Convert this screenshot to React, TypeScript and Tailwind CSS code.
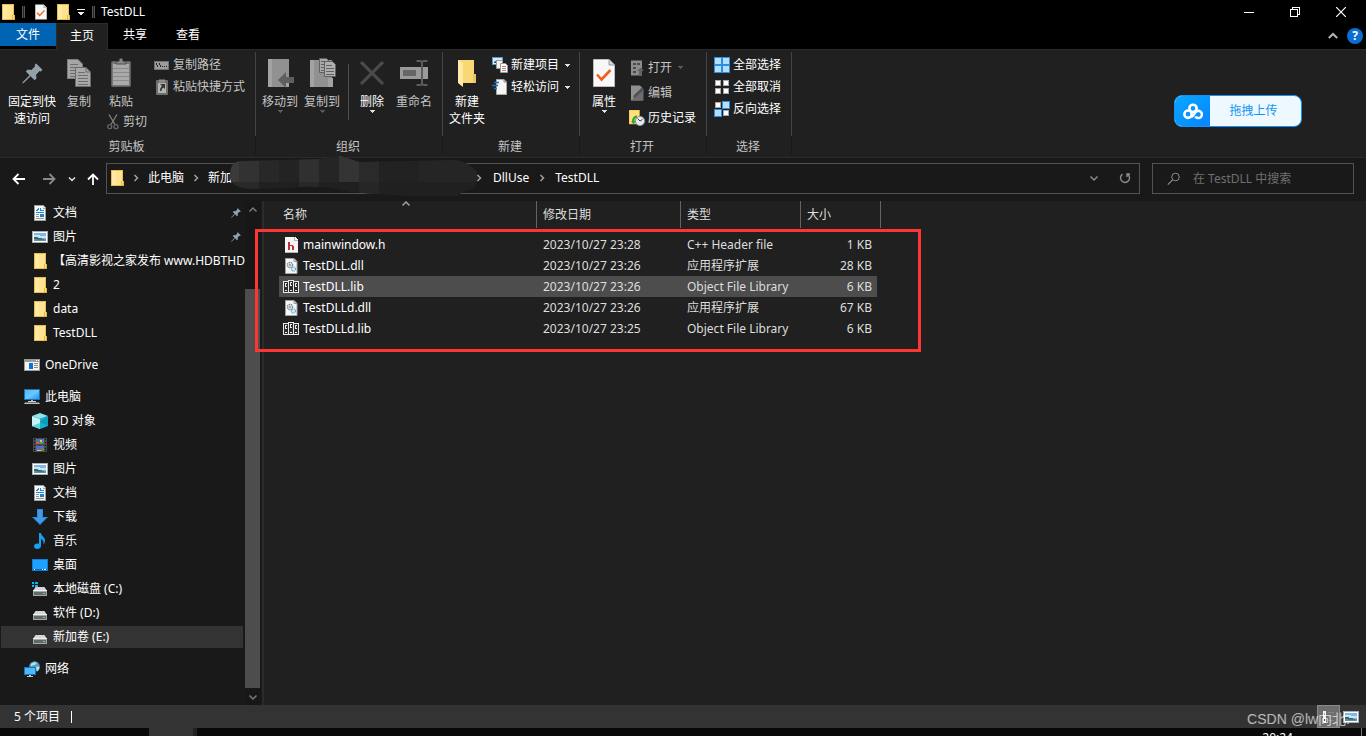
import React from "react";

type IconProps = { className?: string };

const FolderIcon = ({ className = "" }: IconProps) => (
  <svg width="16" height="16" viewBox="0 0 16 16" className={className} aria-hidden="true" shapeRendering="crispEdges">
    <path d="M2 0h12v11h1v5H2z" fill="#e8bf4c" />
    <path d="M3 1h10v14H3z" fill="#ffe391" />
    <path d="M3 1h4v14H3z" fill="#ffe9a4" />
    <path d="M12 11h3v5h-3z" fill="#e0b43e" />
    <path d="M13 11h1v4h-1z" fill="#ffe07f" />
  </svg>
);

const PinShape = ({ className = "", size }: IconProps & { size: number }) => (
  <svg width={size} height={size} viewBox="0 0 20 20" className={className} aria-hidden="true">
    <path d="M13.5 0.5L19.5 6.5L18 8L16.8 7.6L13.4 11.2L13.8 14.8L12 16.4L8.2 12.6L1.6 19L0.2 19.6L0.8 18L7.2 11.6L3.6 8L5.4 6.2L9 6.6L12.5 3.2L12 2z" fill="#93a1ab" />
  </svg>
);

const DocIcon = () => (
  <svg width="16" height="16" viewBox="0 0 16 16" aria-hidden="true" shapeRendering="crispEdges">
    <path d="M2 0h9l3 3v13H2z" fill="#9aa0a3" />
    <path d="M3 1h8v3h2v11H3z" fill="#f6f8f9" />
    <path d="M11 1h1v1h1v1h-2z" fill="#dcdcdc" />
    <path d="M6 3h1v1H6zM8 3h1v1H8zM5 4h2v1H5zM8 4h1v1H8zM4 5h2v1H4zM8 5h4v1H8zM4 7h8v1H4z" fill="#1c86d8" />
    <path d="M4 9h3v1H4zM4 11h3v1H4zM4 13h8v1H4z" fill="#8c989f" />
    <path d="M8 9h4v3H8z" fill="#1c86d8" />
    <path d="M8 11h4v1H8z" fill="#3f7d54" />
  </svg>
);

const PictureIcon = () => (
  <svg width="16" height="16" viewBox="0 0 16 16" aria-hidden="true" shapeRendering="crispEdges">
    <rect x="0" y="2" width="16" height="12" fill="#a9adaf" />
    <rect x="1" y="3" width="14" height="10" fill="#fff" />
    <rect x="2" y="4" width="12" height="8" fill="#7fb6ec" />
    <path d="M2 6h6v1h6v2H2z" fill="#cbe5f2" />
    <path d="M2 8h4v1h4v1H2z" fill="#3a6b62" />
    <path d="M2 10h12v2H2z" fill="#5a93a8" />
    <path d="M5 10h7v1H5z" fill="#3f7781" />
  </svg>
);

const OneDriveIcon = () => (
  <svg width="16" height="16" viewBox="0 0 16 16" aria-hidden="true" shapeRendering="crispEdges">
    <rect x="0" y="2" width="16" height="12" fill="#9b9b9b" />
    <rect x="1" y="5" width="14" height="8" fill="#f4f4f4" />
    <rect x="5" y="6" width="4" height="6" fill="#0a74d6" />
    <path d="M10 6h4v1h-4zM10 8h4v1h-4zM10 10h4v1h-4z" fill="#8a8a8a" />
    <path d="M12 3h1v1h-1zM14 3h1v1h-1z" fill="#fff" />
  </svg>
);

const PcIcon = () => (
  <svg width="16" height="16" viewBox="0 0 16 16" aria-hidden="true">
    <defs>
      <linearGradient id="pc" x1="0" y1="0" x2="1" y2="1">
        <stop offset="0" stopColor="#4db6f8" />
        <stop offset="0.5" stopColor="#6cc8ff" />
        <stop offset="1" stopColor="#1d8fe6" />
      </linearGradient>
    </defs>
    <rect x="0.5" y="0.500" width="15" height="10" fill="url(#pc)" stroke="#1a6fb5" />
    <path d="M7 11h2v1.500H7z" fill="#9fb3c0" />
    <path d="M4 12h8v1H4z" fill="#c9d5dc" />
    <path d="M1 13.500h14l1 1.500H0z" fill="#b6c4cd" />
  </svg>
);

const CubeIcon = () => (
  <svg width="16" height="16" viewBox="0 0 16 16" aria-hidden="true">
    <path d="M8 0l8 3-8 3-8-3z" fill="#8de6ee" />
    <path d="M0 3l8 3v10l-8-3z" fill="#c2f5f6" />
    <path d="M16 3L8 6v10l8-3z" fill="#19b2cb" />
    <path d="M0 13l8-3v6z" fill="#5fd0dd" />
    <path d="M16 13V3l-8 6z" fill="#0f9bc0" />
  </svg>
);

const VideoIcon = () => (
  <svg width="16" height="16" viewBox="0 0 16 16" aria-hidden="true" shapeRendering="crispEdges">
    <rect x="1" y="1" width="14" height="14" fill="#4a4a4a" />
    <path d="M2 2h1v1H2zM2 5h1v1H2zM2 8h1v1H2zM2 11h1v1H2zM2 13h1v1H2zM13 2h1v1h-1zM13 5h1v1h-1zM13 8h1v1h-1zM13 11h1v1h-1zM13 13h1v1h-1z" fill="#111" />
    <rect x="4" y="2" width="8" height="5" fill="#4c6fc9" />
    <rect x="4" y="9" width="8" height="5" fill="#4c6fc9" />
    <path d="M4 5h3v2H4zM9 11h2v1H9z" fill="#e4572e" />
    <path d="M8 3h2v2H8zM5 13h4v1H5z" fill="#f2c13b" />
    <path d="M8 5h3v2H8zM9 12h3v2H9z" fill="#4a9e3f" />
  </svg>
);

const DownloadIcon = () => (
  <svg width="16" height="16" viewBox="0 0 16 16" aria-hidden="true">
    <path d="M5 0h6v8h5l-8 8-8-8h5z" fill="#2b88dc" />
    <path d="M6 1h4v8h3.500L8 14.500 2.500 9H6z" fill="#429ae8" />
  </svg>
);

const MusicIcon = () => (
  <svg width="16" height="16" viewBox="0 0 16 16" aria-hidden="true">
    <path d="M7 0h2c0 3 4 4 4 7.500 0 2-1 3.500-1.500 4 .5-3-.5-4.500-2.500-5.500v7c0 2-1.800 3-3.700 3S2 15 2 13.300 3.600 10.500 5.500 10.500c.6 0 1.100.1 1.500.3z" fill="#18a0f5" />
  </svg>
);

const DesktopIcon = () => (
  <svg width="16" height="16" viewBox="0 0 16 16" aria-hidden="true" shapeRendering="crispEdges">
    <rect x="0" y="2" width="16" height="12" fill="#0b7fd4" />
    <rect x="1" y="3" width="14" height="9" fill="#1ea2ff" />
    <path d="M1 12h14v1H1z" fill="#0a6cb8" />
    <path d="M2 12h1v1H2zM10 12h1v1h-1zM12 12h2v1h-2z" fill="#fff" />
  </svg>
);

const DriveIcon = ({ system = false }: { system?: boolean }) => (
  <svg width="16" height="16" viewBox="0 0 16 16" aria-hidden="true">
    <path d="M3.500 6h9L15 10H1z" fill="#d4d6d7" />
    <rect x="1" y="10" width="14" height="5" fill="#a4a7a9" />
    <rect x="1" y="9" width="14" height="1" fill="#f2f2f2" />
    <rect x="2" y="11" width="12" height="3" fill="#65686a" />
    <rect x="11" y="12" width="2" height="1" fill="#5de07a" />
    {system && <path d="M0 1h2v2H0zM3 1h3v2H3zM0 4h2v2H0zM3 4h3v2H3z" fill="#10b5f2" />}
  </svg>
);

const NetworkIcon = () => (
  <svg width="16" height="16" viewBox="0 0 16 16" aria-hidden="true">
    <circle cx="10.500" cy="5.500" r="5.300" fill="#4f9fc0" />
    <path d="M7 3c2-2 4-1 5-2 1 1 0 3-2 3S8 6 7 5zM12 6c2-1 3 0 3.500 0 0 2-1 4-2.500 4.500z" fill="#b7e1ea" />
    <rect x="0.5" y="6.500" width="11" height="7" fill="#4eb8fb" stroke="#1b74ba" />
    <path d="M5 14h2v1H5zM3 15h6v1H3z" fill="#b5c7d3" />
  </svg>
);

const HeaderFileIcon = () => (
  <svg width="16" height="16" viewBox="0 0 16 16" aria-hidden="true" shapeRendering="crispEdges">
    <path d="M2 0h10l3 3v13H2z" fill="#f5f5f5" />
    <path d="M11 0h1v3h3v1h-4z" fill="#b5b5b5" />
    <path d="M2 15h13v1H2z" fill="#b5b5b5" />
    <path d="M5 5h2v3h3v1h1v4H9V9H7v4H5z" fill="#b5323a" />
  </svg>
);

const DllIcon = () => (
  <svg width="16" height="16" viewBox="0 0 16 16" aria-hidden="true">
    <path d="M2.500 0.500h8.500l3 3v12h-11.500z" fill="#f5f6f7" stroke="#a0a4a6" />
    <path d="M11 0.500v3h3" fill="none" stroke="#999" />
    <circle cx="7" cy="7" r="2.600" fill="#dfe5e8" stroke="#7f8d96" strokeWidth="1.300" strokeDasharray="1.400 .7" />
    <circle cx="7" cy="7" r="0.900" fill="#7f8d96" />
    <circle cx="10.500" cy="11" r="2.100" fill="#d5ebf7" stroke="#6aa6cb" strokeWidth="1.200" strokeDasharray="1.200 .6" />
  </svg>
);

const LibIcon = () => (
  <svg width="16" height="16" viewBox="0 0 16 16" aria-hidden="true" shapeRendering="crispEdges">
    <path d="M0 2h5V1h6v1h5v12H0z" fill="#e9e9e9" />
    <path d="M1 3h4v10H1zM6 2h4v11H6zM11 3h4v10h-4z" fill="#2c2c2c" />
    <path d="M2 4h2v4H2zM7 3h2v4H7zM12 4h2v4h-2zM2 11h2v1H2zM7 11h2v1H7zM12 11h2v1h-2z" fill="#e9e9e9" />
    <path d="M3 5h1v2H3zM8 4h1v2H8zM13 5h1v2h-1z" fill="#2c2c2c" />
  </svg>
);

const CheckDoc = ({ w, h }: { w: number; h: number }) => (
  <svg width={w} height={h} viewBox="0 0 22 28" aria-hidden="true">
    <path d="M0.500 0.500H16L21.500 6v21.500H.5z" fill="#f8f8f8" stroke="#bdbdbd" />
    <path d="M16 .5V6h5.500" fill="#d8d8d8" stroke="#9a9a9a" />
    <path d="M4 15.500l4.500 5L17.500 11" fill="none" stroke="#f2601c" strokeWidth="2.600" />
  </svg>
);

const CopyBig = () => (
  <svg width="24" height="28" viewBox="0 0 24 28" aria-hidden="true">
    <path d="M.5.5H11L15.500 5v14.500H.5z" fill="#a5a5a5" stroke="#7d7d7d" />
    <path d="M3 5.500h8M3 8.500h9M3 11.500h9M3 14.500h6M3 17.500h5" stroke="#6e6e6e" />
    <path d="M8.500 8.500H19L23.500 13v14.500h-15z" fill="#a9a9a9" stroke="#6a6a6a" />
    <path d="M19 8.500V13h4.500" fill="none" stroke="#6a6a6a" />
    <path d="M11 13.500h7M11 16.500h10M11 19.500h10M11 22.500h10M11 25.500h10" stroke="#6e6e6e" />
  </svg>
);

const PasteBig = () => (
  <svg width="20" height="30" viewBox="0 0 20 30" aria-hidden="true">
    <rect x="0.5" y="3.500" width="19" height="25" rx="1" fill="#767676" stroke="#5e5e5e" />
    <rect x="2" y="6" width="16" height="21" fill="#a9a9a9" />
    <path d="M2 10.500h16M2 14.500h16M2 18.500h16M2 22.500h16" stroke="#8a8a8a" />
    <path d="M5 6V3.500h3C8 1 9 .5 10 .5s2 .5 2 3h3V6z" fill="#8a8a8a" stroke="#4f4f4f" />
  </svg>
);

const MoveTo = () => (
  <svg width="28" height="30" viewBox="0 0 28 30" aria-hidden="true">
    <path d="M2 1h21v28H2z" fill="#919191" />
    <path d="M2 1h4v28H2zM19 20h4v9h-4z" fill="#a3a3a3" />
    <path d="M12 22l8-8v5h8v6h-8v5z" fill="#5f5f5f" />
  </svg>
);

const CopyTo = () => (
  <svg width="28" height="32" viewBox="0 0 28 32" aria-hidden="true">
    <path d="M2 3h22v27H2z" fill="#919191" />
    <path d="M2 3h4v27H2zM20 21h5v9h-5z" fill="#a3a3a3" />
    <path d="M11.500 1.500h7l2 2v12h-9z" fill="#a8a8a8" stroke="#606060" />
    <path d="M13 4.500h5M13 7.500h3M13 10.500h3M13 13.500h3" stroke="#606060" />
    <path d="M16.500 4.500h8l3 3v12h-11z" fill="#b0b0b0" stroke="#606060" />
    <path d="M18 8.500h6M18 11.500h8M18 14.500h8M18 17.500h8" stroke="#606060" />
  </svg>
);

const RenameBig = () => (
  <svg width="28" height="28" viewBox="0 0 28 28" aria-hidden="true">
    <rect x="0" y="8" width="28" height="12" fill="#9a9a9a" />
    <rect x="3" y="11" width="13" height="6" fill="#666" />
    <path d="M16.500 2h3.500c1 0 2 .5 2 2v20c0 1.500-1 2-2 2h-3.500M27.500 2H24c-1 0-2 .5-2 2M27.500 26H24c-1 0-2-.5-2-2" fill="none" stroke="#5c5c5c" strokeWidth="2" />
  </svg>
);

const NewFolderBig = () => (
  <svg width="20" height="28" viewBox="0 0 20 28" aria-hidden="true">
    <path d="M1 1h16v14h2v9H1z" fill="#f8d775" />
    <path d="M1 1l5 3v24l-5-4z" fill="#ffe9a6" />
    <path d="M16 15h3v9h-3z" fill="#ecc565" />
  </svg>
);

const Scissors = () => (
  <svg width="12" height="16" viewBox="0 0 12 16" aria-hidden="true">
    <path d="M2 .5l6 10M10 .5l-6 10" stroke="#808080" strokeWidth="1.300" />
    <circle cx="2.700" cy="12.700" r="2" fill="none" stroke="#666" strokeWidth="1.300" />
    <circle cx="9" cy="12.700" r="2" fill="none" stroke="#666" strokeWidth="1.300" />
  </svg>
);

const PathIcon = () => (
  <svg width="16" height="16" viewBox="0 0 16 16" aria-hidden="true" shapeRendering="crispEdges">
    <rect x="0" y="4" width="15" height="9" fill="#6f6f6f" />
    <rect x="1" y="5" width="13" height="7" fill="#9c9c9c" />
    <path d="M2 6h1v2h1v2H3V8H2zM5 6h1v2h1v2H6V8H5zM8 9h1v1H8zM10 9h1v1h-1zM12 9h1v1h-1z" fill="#222" />
  </svg>
);

const ShortcutPaste = () => (
  <svg width="16" height="16" viewBox="0 0 16 16" aria-hidden="true">
    <rect x="2" y="1" width="12" height="15" rx="1" fill="#6e6e6e" />
    <rect x="4" y="4" width="8" height="10" fill="#b4b4b4" />
    <path d="M5 0.500h6v3H5z" fill="#8d8d8d" />
    <path d="M6 5h5v5L9.500 8.500C8 9.500 7.500 10.500 7.500 12H6c0-2 .4-3.500 2-5z" fill="#333" />
  </svg>
);

const NewItemIcon = () => (
  <svg width="16" height="16" viewBox="0 0 16 16" aria-hidden="true">
    <rect x="0.5" y="0.500" width="10" height="7" fill="#d4ecf8" stroke="#5b98bd" />
    <path d="M2 5l3-2 2 2 2-1v2H2z" fill="#27577a" />
    <path d="M4.500 3.500h6v8h-6z" fill="#f3f3f3" stroke="#9a9a9a" />
    <path d="M8.500 6.500h5l2 2v7h-7z" fill="#fafafa" stroke="#9a9a9a" />
    <path d="M10 9.500h4M10 13.500h4" stroke="#e46a5c" />
    <path d="M10 11.500h4" stroke="#6c9fd0" />
  </svg>
);

const EasyAccessIcon = () => (
  <svg width="16" height="16" viewBox="0 0 16 16" aria-hidden="true">
    <path d="M4.500.5H12L14.500 3v12.500h-10z" fill="#f5f5f5" stroke="#a8a8a8" />
    <path d="M12 .5V3h2.500" fill="none" stroke="#888" />
    <path d="M2 3.500h5M0 6.500h6M2 9.500h3" stroke="#1a72c4" strokeWidth="1.400" />
  </svg>
);

const OpenIcon = () => (
  <svg width="16" height="16" viewBox="0 0 16 16" aria-hidden="true">
    <rect x="2" y="0.500" width="11" height="15" fill="#8c8c8c" />
    <path d="M4 3h3v2H4zM4 7h3v2H4zM4 11h3v2H4zM8 3h3v2H8z" fill="#4b4b4b" />
    <path d="M8 11l3.500-3.500L15 11h-2v5h-3v-5z" fill="#646464" />
  </svg>
);

const EditIcon = () => (
  <svg width="16" height="16" viewBox="0 0 16 16" aria-hidden="true">
    <path d="M2 .5h9l3 3v12H2z" fill="#8f8f8f" />
    <path d="M2.500 15.500L14.500 4v11.500z" fill="#6c6c6c" />
    <path d="M4 13l1-3 8-7.500 2 2L7 12z" fill="#505050" />
  </svg>
);

const HistoryIcon = () => (
  <svg width="16" height="16" viewBox="0 0 16 16" aria-hidden="true">
    <path d="M0 0h10.500v14H0z" fill="#ffe07c" stroke="#d8ac35" strokeWidth=".6" />
    <path d="M3 11c0-3 2-5.500 5-5.500V8c-2 0-2.500 1-2.500 3l1.500 0-2.500 3.500L2 11z" fill="#36a83a" />
    <circle cx="11" cy="11" r="4.600" fill="#e6e9eb" stroke="#8b9195" />
    <path d="M8.500 8.500L11 11l2.500-1.500" fill="none" stroke="#3d4448" />
  </svg>
);

const SelectIcon = ({ on }: { on: boolean[] }) => (
  <svg width="16" height="16" viewBox="0 0 16 16" aria-hidden="true" shapeRendering="crispEdges">
    {on.map((sel, i) => {
      const x = (i % 2) * 8;
      const y = i < 2 ? 0 : 8;
      return sel ? (
        <g key={i}>
          <rect x={x} y={y} width="8" height="8" fill="#2b8fe0" />
          <rect x={x + 1} y={y + 1} width="6" height="6" fill="#b4defc" />
        </g>
      ) : (
        <g key={i}>
          <rect x={x + 1} y={y + 1} width="6" height="6" fill="#a8a8a8" />
          <rect x={x + 2} y={y + 2} width="4" height="4" fill="#fff" />
        </g>
      );
    })}
  </svg>
);

const Caret = ({ dim = false }: { dim?: boolean }) => (
  <svg width="5" height="3" viewBox="0 0 5 3" aria-hidden="true" shapeRendering="crispEdges" className={dim ? "text-[#5a5a5a]" : "text-[#e0e0e0]"}>
    <path d="M0 0h5v1H4v1H3v1H2V2H1V1H0z" fill="currentColor" />
  </svg>
);

const Chevron = ({ dir, className = "" }: { dir: "up" | "down" | "right" } & IconProps) => (
  <svg width="10" height="10" viewBox="0 0 10 10" className={className} aria-hidden="true">
    <path
      d={dir === "up" ? "M1.500 6.500L5 3l3.500 3.500" : dir === "down" ? "M1.500 3.500L5 7l3.500-3.500" : "M3.500 2L6.500 5l-3 3"}
      fill="none"
      stroke="currentColor"
      strokeWidth="1.500"
    />
  </svg>
);

type BigProps = { icon: React.ReactNode; lines: string[]; dim?: boolean; caret?: boolean; width: string };

const BigButton = ({ icon, lines, dim = false, caret = false, width }: BigProps) => (
  <button type="button" className={`flex shrink-0 flex-col items-center self-start pt-[3px] ${width} ${dim ? "text-[#c4c4c4]" : "text-white"}`}>
    <span className="flex h-8 items-center justify-center">{icon}</span>
    <span className="mt-1 whitespace-nowrap leading-[17px]">
      {lines.map((l) => (
        <span key={l} className="block">{l}</span>
      ))}
    </span>
    {caret && <Caret dim={dim} />}
  </button>
);

type SmallProps = { icon: React.ReactNode; label: string; dim?: boolean; caret?: boolean; height?: string };

const SmallButton = ({ icon, label, dim = false, caret = false, height = "h-[22px]" }: SmallProps) => (
  <button type="button" className={`flex shrink-0 items-center whitespace-nowrap ${height} ${dim ? "text-[#c4c4c4]" : "text-white"}`}>
    <span className="mr-[3px] flex w-4 justify-center">{icon}</span>
    {label}
    {caret && <span className="ml-1.5"><Caret dim={dim} /></span>}
  </button>
);

const Group = ({ label, width, children }: { label: string; width: string; children: React.ReactNode }) => (
  <section aria-label={label} className={`flex shrink-0 flex-col ${width}`}>
    <div className="mt-0.5 flex h-[84px] border-r border-[#444444] pt-0.5">{children}</div>
    <div className="h-[19px] border-r border-[#191919] pr-0.5 text-center leading-[21px] text-[#c4c4c4]">{label}</div>
  </section>
);

const Smudge = () => (
  <svg width="252" height="42" viewBox="0 0 252 42" className="absolute -top-2 left-[122px]" aria-hidden="true">
    <defs>
      <clipPath id="blot">
        <path d="M1 20C1 9 5 5 14 5L92 3C100 1 108 0 112 0L130 6L226 4C240 6 249 14 249 21C249 29 244 34 234 36L228 40L176 40L120 36C100 30 80 30 60 32L22 33C8 32 1 28 1 20z" />
      </clipPath>
    </defs>
    <g clipPath="url(#blot)" shapeRendering="crispEdges">
      <rect width="252" height="42" fill="#202020" />
      <rect width="10" height="26" fill="#3a3a3a" />
      <rect x="10" width="20" height="26" fill="#323232" />
      <rect x="30" width="20" height="26" fill="#282828" />
      <rect x="50" width="20" height="26" fill="#232323" />
      <rect x="70" width="20" height="26" fill="#303030" />
      <rect x="90" width="20" height="26" fill="#252525" />
      <rect x="110" width="20" height="26" fill="#343434" />
      <rect x="130" width="20" height="26" fill="#2a2a2a" />
      <rect x="150" width="40" height="26" fill="#222222" />
      <rect x="190" width="62" height="26" fill="#252525" />
      <rect y="26" width="30" height="16" fill="#292929" />
      <rect x="70" y="26" width="20" height="16" fill="#282828" />
      <rect x="130" y="26" width="20" height="16" fill="#262626" />
    </g>
  </svg>
);

type NavEntry = { label: string; icon: React.ReactNode; root?: boolean; pinned?: boolean; gap?: boolean; selected?: boolean };

const navEntries: NavEntry[] = [
  { label: "文档", icon: <DocIcon />, pinned: true },
  { label: "图片", icon: <PictureIcon />, pinned: true },
  { label: "【高清影视之家发布 www.HDBTHD", icon: <FolderIcon /> },
  { label: "2", icon: <FolderIcon /> },
  { label: "data", icon: <FolderIcon /> },
  { label: "TestDLL", icon: <FolderIcon /> },
  { label: "OneDrive", icon: <OneDriveIcon />, root: true, gap: true },
  { label: "此电脑", icon: <PcIcon />, root: true, gap: true },
  { label: "3D 对象", icon: <CubeIcon /> },
  { label: "视频", icon: <VideoIcon /> },
  { label: "图片", icon: <PictureIcon /> },
  { label: "文档", icon: <DocIcon /> },
  { label: "下载", icon: <DownloadIcon /> },
  { label: "音乐", icon: <MusicIcon /> },
  { label: "桌面", icon: <DesktopIcon /> },
  { label: "本地磁盘 (C:)", icon: <DriveIcon system /> },
  { label: "软件 (D:)", icon: <DriveIcon /> },
  { label: "新加卷 (E:)", icon: <DriveIcon />, selected: true },
  { label: "网络", icon: <NetworkIcon />, root: true, gap: true },
];

const files = [
  { name: "mainwindow.h", date: "2023/10/27 23:28", type: "C++ Header file", size: "1 KB", icon: <HeaderFileIcon /> },
  { name: "TestDLL.dll", date: "2023/10/27 23:26", type: "应用程序扩展", size: "28 KB", icon: <DllIcon /> },
  { name: "TestDLL.lib", date: "2023/10/27 23:26", type: "Object File Library", size: "6 KB", icon: <LibIcon />, selected: true },
  { name: "TestDLLd.dll", date: "2023/10/27 23:26", type: "应用程序扩展", size: "67 KB", icon: <DllIcon /> },
  { name: "TestDLLd.lib", date: "2023/10/27 23:25", type: "Object File Library", size: "6 KB", icon: <LibIcon /> },
];

const TitleBar = () => (
  <header className="flex h-[23px] shrink-0 items-center">
    <FolderIcon />
    <span className="ml-1.5 h-3 w-[3px] border-x border-[#555555] bg-[#222222]" />
    <button type="button" aria-label="属性" className="ml-2.5"><CheckDoc w={12} h={16} /></button>
    <button type="button" aria-label="新建文件夹" className="ml-2"><FolderIcon /></button>
    <button type="button" aria-label="自定义快速访问工具栏" className="ml-1.5">
      <svg width="8" height="8" viewBox="0 0 8 8" shapeRendering="crispEdges" aria-hidden="true">
        <path d="M0 1h8v1H0zM1 4h6v1H6v1H5v1H3V6H2V5H1z" fill="#eee" />
      </svg>
    </button>
    <span className="ml-[7px] h-3 w-[3px] border-x border-[#555555] bg-[#222222]" />
    <h1 className="ml-1.5">TestDLL</h1>
    <div className="ml-auto flex h-5 pr-0.5">
      <button type="button" aria-label="最小化" className="flex w-[46px] items-center justify-center">
        <svg width="10" height="10" viewBox="0 0 10 10" shapeRendering="crispEdges"><path d="M0 5h10v1H0z" fill="#fff" /></svg>
      </button>
      <button type="button" aria-label="还原" className="flex w-[46px] items-center justify-center">
        <svg width="10" height="10" viewBox="0 0 10 10" shapeRendering="crispEdges"><path d="M.5 2.500h7v7h-7zM2.500 2.500v-2h7v7h-2" fill="none" stroke="#fff" /></svg>
      </button>
      <button type="button" aria-label="关闭" className="flex w-[46px] items-center justify-center">
        <svg width="10" height="10" viewBox="0 0 10 10"><path d="M0 0l10 10M10 0L0 10" stroke="#fff" strokeWidth="1.200" /></svg>
      </button>
    </div>
  </header>
);

const Tabs = () => (
  <nav className="flex h-[26px] shrink-0 leading-6" aria-label="功能区">
    <button type="button" className="h-[23px] w-14 bg-[#0063b1]">文件</button>
    <button type="button" className="relative z-10 -mb-px h-[27px] w-[52px] border border-b-0 border-[#2b2b2b] bg-[#202020] pb-0.5">主页</button>
    <button type="button" className="h-6 w-[54px]">共享</button>
    <button type="button" className="h-6 w-[52px]">查看</button>
    <div className="ml-auto flex items-center pr-[3px]">
      <button type="button" aria-label="最小化功能区" className="mr-[9px] text-[#b5b5b5]">
        <svg width="10" height="8" viewBox="0 0 10 8" className="block"><path d="M.8 6L5 2l4.200 4" fill="none" stroke="currentColor" strokeWidth="2" /></svg>
      </button>
      <button type="button" aria-label="帮助" className="h-4 w-4 rounded-full bg-[#0a6fd0] text-center text-xs font-bold leading-4">?</button>
    </div>
  </nav>
);

const Ribbon = () => (
  <div className="relative flex h-[109px] shrink-0 overflow-hidden border-y border-[#2b2b2b] bg-[#202020]">
    <Group label="剪贴板" width="w-[256px]">
      <BigButton width="w-16" lines={["固定到快", "速访问"]} icon={<PinShape size={21} />} />
      <BigButton width="w-[30px]" lines={["复制"]} dim icon={<CopyBig />} />
      <div className="ml-3 flex w-[41px] flex-col">
        <BigButton width="w-[30px]" lines={["粘贴"]} dim icon={<PasteBig />} />
        <SmallButton height="h-6" label="剪切" dim icon={<Scissors />} />
      </div>
      <div className="ml-[7px] flex flex-col">
        <SmallButton label="复制路径" dim icon={<PathIcon />} />
        <SmallButton label="粘贴快捷方式" dim icon={<ShortcutPaste />} />
      </div>
    </Group>
    <Group label="组织" width="w-[187px]">
      <div className="ml-[3px] flex">
        <BigButton width="w-[42px]" lines={["移动到"]} dim caret icon={<MoveTo />} />
        <BigButton width="w-[42px]" lines={["复制到"]} dim caret icon={<CopyTo />} />
        <span className="ml-[5px] mr-0.5 mt-2.5 h-14 w-px bg-[#4f4f4f]" />
        <BigButton
          width="w-[42px]"
          lines={["删除"]}
          caret
          icon={<svg width="24" height="24" viewBox="0 0 24 24" aria-hidden="true"><path d="M1 1l22 22M23 1L1 23" stroke="#4a4a4a" strokeWidth="3.200" /></svg>}
        />
        <BigButton width="w-[42px]" lines={["重命名"]} dim icon={<RenameBig />} />
      </div>
    </Group>
    <Group label="新建" width="w-[137px]">
      <BigButton width="w-12" lines={["新建", "文件夹"]} icon={<NewFolderBig />} />
      <div className="ml-px flex flex-col">
        <SmallButton label="新建项目" caret icon={<NewItemIcon />} />
        <SmallButton label="轻松访问" caret icon={<EasyAccessIcon />} />
      </div>
    </Group>
    <Group label="打开" width="w-[127px]">
      <BigButton width="w-12" lines={["属性"]} caret icon={<CheckDoc w={22} h={28} />} />
      <div className="ml-px flex flex-col pt-px">
        <SmallButton height="h-[25px]" label="打开" dim caret icon={<OpenIcon />} />
        <SmallButton height="h-[25px]" label="编辑" dim icon={<EditIcon />} />
        <SmallButton height="h-[25px]" label="历史记录" icon={<HistoryIcon />} />
      </div>
    </Group>
    <Group label="选择" width="w-[85px]">
      <div className="ml-[7px] flex flex-col">
        <SmallButton label="全部选择" icon={<SelectIcon on={[true, true, true, true]} />} />
        <SmallButton label="全部取消" icon={<SelectIcon on={[false, false, false, false]} />} />
        <SmallButton label="反向选择" icon={<SelectIcon on={[false, true, true, false]} />} />
      </div>
    </Group>
    <button type="button" className="absolute right-16 top-[45px] flex h-8 w-32 overflow-hidden rounded-lg border border-[#0d94ff] bg-[#eef8ff] text-[#1296f0]">
      <span className="flex h-full w-[35px] items-center justify-center bg-linear-to-br from-[#0ca6ff] to-[#0a85ff]">
        <svg width="20" height="17" viewBox="0 0 22 18" aria-hidden="true">
          <g fill="none" stroke="#fff" strokeWidth="2.800">
            <circle cx="11" cy="5.500" r="4" />
            <circle cx="5.500" cy="12" r="4" />
            <path d="M9 15c2-.5 3-2.500 4.200-4.500a4 4 0 1 1 .3 4" />
          </g>
        </svg>
      </span>
      <span className="flex-1 pr-1 text-center leading-[30px]">拖拽上传</span>
    </button>
  </div>
);

const NavBar = () => (
  <div className="flex h-[43px] shrink-0 items-start pr-3 pt-[5px]">
    <div className="flex h-8 w-[106px] shrink-0 items-center pl-3">
      <button type="button" aria-label="后退">
        <svg width="14" height="12" viewBox="0 0 14 12"><path d="M6.500 1L1.500 6l5 5M1.500 6H13" fill="none" stroke="#fff" strokeWidth="1.800" /></svg>
      </button>
      <button type="button" aria-label="前进" className="ml-4">
        <svg width="14" height="12" viewBox="0 0 14 12"><path d="M7.500 1l5 5-5 5M12.500 6H1" fill="none" stroke="#8a8a8a" strokeWidth="1.800" /></svg>
      </button>
      <button type="button" aria-label="最近浏览的位置" className="ml-3">
        <svg width="8" height="6" viewBox="0 0 8 6"><path d="M1 1.500l3 3 3-3" fill="none" stroke="#e5e5e5" strokeWidth="1.500" /></svg>
      </button>
      <button type="button" aria-label="上移" className="ml-[11px]">
        <svg width="12" height="13" viewBox="0 0 12 13"><path d="M1 6.500l5-5 5 5M6 1.500V12" fill="none" stroke="#fff" strokeWidth="1.800" /></svg>
      </button>
    </div>
    <div className="relative flex h-[31px] min-w-0 flex-1 items-center border border-[#535353] pb-px pl-0.5">
      <FolderIcon />
      <Chevron dir="right" className="ml-1.5 text-[#a0a0a0]" />
      <a href="#pc" className="ml-[7px] whitespace-nowrap">此电脑</a>
      <Chevron dir="right" className="ml-[7px] text-[#a0a0a0]" />
      <a href="#volume" className="ml-[7px] w-[268px] shrink-0 whitespace-nowrap">新加</a>
      <Chevron dir="right" className="relative z-10 -ml-0.5 text-[#a0a0a0]" />
      <a href="#dlluse" className="ml-[9px]">DllUse</a>
      <Chevron dir="right" className="ml-2 text-[#a0a0a0]" />
      <a href="#testdll" className="ml-2">TestDLL</a>
      <button type="button" aria-label="以前的位置" className="ml-auto mr-5 text-[#8c8c8c]"><Chevron dir="down" /></button>
      <button type="button" aria-label="刷新" className="mr-2 text-[#8c8c8c]">
        <svg width="12" height="12" viewBox="0 0 12 12"><path d="M3.500 2.200A4.500 4.500 0 1 0 8.800 2.400M8 5V2h3" fill="none" stroke="currentColor" strokeWidth="1.400" /></svg>
      </button>
      <Smudge />
    </div>
    <label className="ml-3 flex h-[31px] w-[202px] shrink-0 items-center border border-[#535353] pl-3.5">
      <svg width="14" height="14" viewBox="0 0 14 14" aria-hidden="true"><circle cx="8.500" cy="5" r="3.800" fill="none" stroke="#8a8a8a" /><path d="M5.800 7.700L.8 12.700" stroke="#8a8a8a" strokeWidth="1.200" /></svg>
      <input type="search" aria-label="搜索" placeholder="在 TestDLL 中搜索" className="ml-3 w-40 bg-transparent outline-none placeholder:text-[#707070]" />
    </label>
  </div>
);

const Sidebar = () => (
  <aside className="flex w-[264px] shrink-0 border-r-2 border-[#2b2b2b]">
    <nav aria-label="导航窗格" className="w-[245px] shrink-0 overflow-hidden pr-px">
      {navEntries.map((e, i) => (
        <a
          key={i}
          href={`#nav-${i}`}
          className={`flex h-6 items-center whitespace-nowrap ${e.gap ? "mt-2" : ""} ${e.selected ? "mx-px border-y border-[#191919] bg-[#333333] pl-[31px]" : e.root ? "pl-6" : "pl-8"}`}
        >
          <span className="mr-[5px] shrink-0">{e.icon}</span>
          {e.label}
          {e.pinned && <PinShape size={10} className="ml-auto mr-[3px]" />}
        </a>
      ))}
    </nav>
    <div className="flex w-[15px] flex-col items-center bg-[#171717] pb-[3px] pt-1" aria-hidden="true">
      <Chevron dir="up" className="text-[#7a7a7a]" />
      <div className="mb-1 mt-[74px] w-[15px] flex-1 bg-[#4d4d4d]" />
      <Chevron dir="down" className="text-[#7a7a7a]" />
    </div>
  </aside>
);

const FileList = () => (
  <main className="relative min-w-0 flex-1 overflow-hidden bg-[#202020]">
    <table className="ml-[15px] table-fixed border-separate border-spacing-0 text-left">
      <colgroup>
        <col className="w-[258px]" />
        <col className="w-36" />
        <col className="w-[120px]" />
        <col className="w-[76px]" />
        <col className="w-1" />
      </colgroup>
      <thead>
        <tr className="h-[27px] text-[#dedede]">
          <th className="relative border-r border-[#636363] p-0 pl-1 font-normal">
            <Chevron dir="up" className="absolute left-[122px] -top-0.5 text-[#a0a0a0]" />
            名称
          </th>
          <th className="border-r border-[#636363] p-0 pl-1.5 font-normal">修改日期</th>
          <th className="border-r border-[#636363] p-0 pl-1.5 font-normal">类型</th>
          <th colSpan={2} className="border-r border-[#636363] p-0 pl-1.5 font-normal">大小</th>
        </tr>
      </thead>
      <tbody>
        <tr className="h-1.5"><td colSpan={5} className="p-0" /></tr>
        {files.map((f) => {
          const bg = f.selected ? "bg-[#4d4d4d]" : "";
          return (
            <tr key={f.name} className="h-[21px] whitespace-nowrap leading-5 text-[#dedede]">
              <td className={`p-0 pl-1 text-white ${bg}`}>
                <span className="flex items-center gap-1">{f.icon}{f.name}</span>
              </td>
              <td className={`p-0 pl-1.5 ${bg}`}>{f.date}</td>
              <td className={`p-0 pl-1.5 ${bg}`}>{f.type}</td>
              <td className={`p-0 pr-[5px] text-right ${bg}`}>{f.size}</td>
              <td className="p-0" />
            </tr>
          );
        })}
      </tbody>
    </table>
  </main>
);

const StatusBar = () => (
  <footer className="relative flex h-[23px] shrink-0 items-center bg-[#333333] pl-3.5">
    <span>5 个项目</span>
    <span className="ml-[11px] h-3 w-px bg-white" />
    <div className="ml-auto flex h-full items-center pr-[7px]">
      <button type="button" aria-label="详细信息" className="flex h-full w-[23px] items-center justify-center border border-[#8a8a8a] bg-[#6e6e6e]">
        <svg width="14" height="14" viewBox="0 0 14 14" shapeRendering="crispEdges"><path d="M1 1h3v12H1z" fill="#f2f2f2" /><path d="M2 3h1v2H2zM2 9h1v2H2z" fill="#1c5c86" /><path d="M6 2h6v1H6zM6 6h6v1H6zM6 10h6v1H6z" fill="#858585" /></svg>
      </button>
      <button type="button" aria-label="大缩略图" className="ml-[3px]"><PictureIcon /></button>
    </div>
    <span className="absolute right-4 top-1 whitespace-nowrap font-['Liberation_Sans','Noto_Sans_CJK_SC',sans-serif] text-sm leading-5 text-white/65">CSDN @lw向北.</span>
  </footer>
);

const Taskbar = () => (
  <div className="flex h-2 shrink-0 overflow-hidden bg-[#080808]">
    <span className="ml-[149px] w-11 bg-[#333333]" />
    <span className="w-1 bg-[#222222]" />
    <span className="ml-auto mr-[68px] pt-0.5 leading-4">20:24</span>
    <span className="mr-1 w-px bg-[#777777]" />
  </div>
);

export default function App() {
  return (
    <div className="flex h-screen flex-col overflow-hidden bg-black font-['Noto_Sans','Noto_Sans_CJK_SC',sans-serif] text-xs text-white">
      <TitleBar />
      <Tabs />
      <Ribbon />
      <div className="relative flex min-h-0 flex-1 flex-col bg-[#191919]">
        <NavBar />
        <div className="flex min-h-0 flex-1">
          <Sidebar />
          <FileList />
        </div>
        <div className="pointer-events-none absolute left-[255px] top-[71px] h-[123px] w-[666px] border-3 border-[#ff3434]" />
      </div>
      <StatusBar />
      <Taskbar />
    </div>
  );
}
